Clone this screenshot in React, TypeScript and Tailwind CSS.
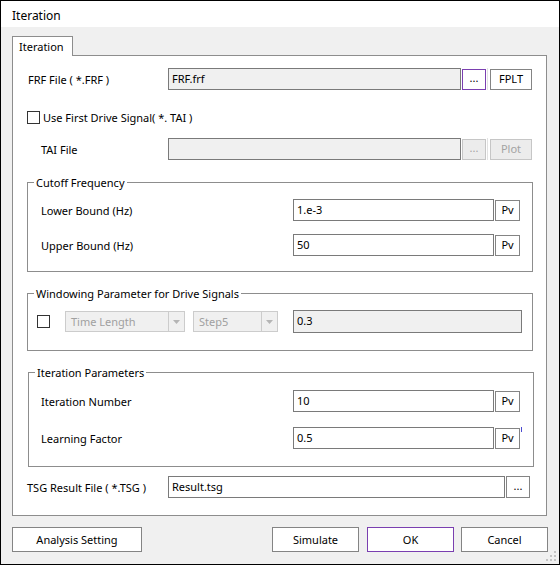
import type { ReactNode } from 'react';

const FONT = { fontFamily: '"Noto Sans", "Segoe UI", sans-serif' };

const Btn = ({ children, className = '', disabled = false, focused = false }: { children: ReactNode; className?: string; disabled?: boolean; focused?: boolean }) => (
  <div
    className={
      'flex shrink-0 items-center justify-center border text-[11px] ' +
      (disabled
        ? 'border-[#c6c6c6] bg-[#ececec] text-[#a3a3a3] '
        : focused
          ? 'border-[#7a3fb0] bg-white text-black '
          : 'border-[#848484] bg-white text-black ') +
      className
    }
  >
    {children}
  </div>
);

const Field = ({ value, className = '', disabled = false }: { value?: string; className?: string; disabled?: boolean }) => (
  <div
    className={
      'h-[22px] shrink-0 border border-[#7a7a7a] px-[3px] pt-[1px] text-[11px] leading-[17px] text-black ' +
      (disabled ? 'bg-[#f0f0f0] ' : 'bg-white ') +
      className
    }
  >
    {value}
  </div>
);

const CheckBox = () => <div className="h-[13px] w-[13px] shrink-0 border border-[#333333] bg-white" />;

const Label = ({ children, className = '' }: { children: ReactNode; className?: string }) => (
  <div className={'shrink-0 pt-[3px] text-[11px] text-black ' + className}>{children}</div>
);

const Group = ({ title, className = '', children }: { title: string; className?: string; children: ReactNode }) => (
  <div className={'relative border border-[#8d8d8d] ' + className}>
    <span className="absolute -top-[8px] left-[6px] bg-white px-[2px] text-[11px] leading-[16px] text-black">{title}</span>
    {children}
  </div>
);

const Combo = ({ label, className = '' }: { label: string; className?: string }) => (
  <div className={'flex h-[21px] shrink-0 border border-[#cccccc] bg-[#f0f0f0] text-[11px] text-[#a0a0a0] ' + className}>
    <div className="flex-1 px-[5px] pt-px leading-[18px]">{label}</div>
    <div className="flex w-[16px] items-center justify-center border-l border-[#cccccc]">
      <svg width="7" height="4" viewBox="0 0 7 4">
        <path d="M0 0h7L3.5 4z" fill="#b5b5b5" />
      </svg>
    </div>
  </div>
);

const PvRow = ({ label, value, tick = false }: { label: string; value: string; tick?: boolean }) => (
  <div className="flex h-[22px] items-center">
    <Label className="w-[252px]">{label}</Label>
    <Field value={value} className="w-[201px]" />
    <Btn className="ml-[1px] h-[21px] w-[25px] pt-px">Pv</Btn>
    {tick && <div className="ml-[1px] h-[5px] w-px self-start bg-[#4a4ad0]" />}
  </div>
);

export default function App() {
  return (
    <div style={FONT} className="relative flex h-[565px] w-[560px] flex-col border border-black bg-[#f0f0f0]">
      <div className="flex h-[26px] shrink-0 items-center bg-white pl-[11px] pt-[4px] text-[12px] text-black">Iteration</div>

      <div className="ml-[11px] mt-[9px] flex flex-col">
        <div className="relative z-10 -mb-px flex h-[20px] w-[61px] items-center border border-b-0 border-[#8d8d8d] bg-white pl-[6px] pt-[2px] text-[11px] text-black">
          Iteration
        </div>

        <div className="flex h-[461px] w-[535px] flex-col border border-[#8d8d8d] bg-white">
          <div className="mt-[12px] flex h-[22px] items-center pl-[15px]">
            <Label className="w-[140px]">FRF File ( *.FRF )</Label>
            <Field value="FRF.frf" disabled className="w-[293px]" />
            <Btn focused className="ml-[1px] h-[21px] w-[24px] pb-[2px]">...</Btn>
            <div className="ml-[1px] h-[22px] w-px bg-[#e2e2e2]" />
            <Btn className="ml-[2px] h-[21px] w-[42px] pt-px">FPLT</Btn>
          </div>

          <div className="mt-[21px] flex h-[13px] items-center pl-[14px]">
            <CheckBox />
            <span className="ml-[3px] pt-[2px] text-[11px] text-black">Use First Drive Signal( *. TAI )</span>
          </div>

          <div className="mt-[14px] flex h-[22px] items-center pl-[28px]">
            <Label className="w-[127px]">TAI File</Label>
            <Field disabled className="w-[293px]" />
            <Btn disabled className="ml-[1px] h-[21px] w-[24px] pb-[2px]">...</Btn>
            <div className="ml-[1px] h-[22px] w-px bg-[#e2e2e2]" />
            <Btn disabled className="ml-[2px] h-[21px] w-[42px] pt-px">Plot</Btn>
          </div>

          <Group title="Cutoff Frequency" className="ml-[14px] mt-[22px] flex h-[90px] w-[506px] flex-col gap-[13px] pl-[13px] pt-[16px]">
            <PvRow label="Lower Bound (Hz)" value="1.e-3" />
            <PvRow label="Upper Bound (Hz)" value="50" />
          </Group>

          <Group title="Windowing Parameter for Drive Signals" className="ml-[14px] mt-[21px] h-[58px] w-[506px] pt-[16px]">
            <div className="flex h-[23px] items-center pl-[9px]">
              <CheckBox />
              <Combo label="Time Length" className="ml-[15px] w-[120px]" />
              <Combo label="Step5" className="ml-[8px] w-[85px]" />
              <Field value="0.3" disabled className="ml-[15px] h-[23px] w-[229px]" />
            </div>
          </Group>

          <Group title="Iteration Parameters" className="ml-[15px] mt-[21px] flex h-[95px] w-[506px] flex-col gap-[15px] pl-[12px] pt-[17px]">
            <PvRow label="Iteration Number" value="10" />
            <PvRow label="Learning Factor" value="0.5" tick />
          </Group>

          <div className="mt-[9px] flex h-[22px] items-center pl-[14px]">
            <Label className="w-[141px]">TSG Result File ( *.TSG )</Label>
            <Field value="Result.tsg" className="w-[337px]" />
            <Btn className="ml-[1px] h-[22px] w-[24px] pb-[2px]">...</Btn>
          </div>
        </div>
      </div>

      <div className="mt-[11px] flex h-[25px] items-center pl-[11px] pr-[11px]">
        <Btn className="h-[25px] w-[130px] pt-px">Analysis Setting</Btn>
        <div className="flex-1" />
        <Btn className="h-[25px] w-[87px] pt-px">Simulate</Btn>
        <Btn focused className="ml-[8px] h-[25px] w-[87px] pt-px">OK</Btn>
        <Btn className="ml-[7px] h-[25px] w-[87px] pt-px">Cancel</Btn>
      </div>

      <svg className="absolute bottom-[2px] right-[2px]" width="11" height="11" viewBox="0 0 11 11">
        {[
          [8, 0],
          [8, 4],
          [4, 4],
          [8, 8],
          [4, 8],
          [0, 8],
        ].map(([x, y]) => (
          <rect key={`${x}-${y}`} x={x} y={y} width="2" height="2" fill="#c4c4c4" />
        ))}
      </svg>
    </div>
  );
}
